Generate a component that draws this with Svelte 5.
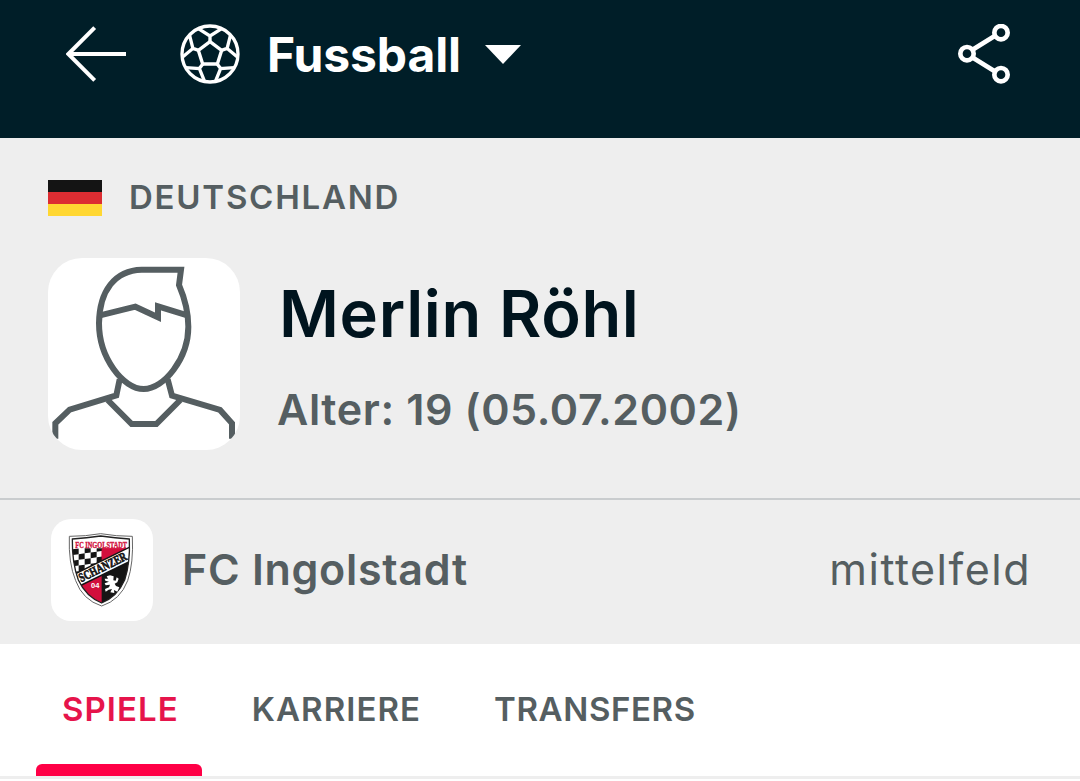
<script lang="ts">
  let activeTab = 'SPIELE';
  const tabs = ['SPIELE', 'KARRIERE', 'TRANSFERS'];

  // seams of the ball, one group per patch on the rim
  const patches = [0, 72, 144, 216, 288];
</script>

<header class="topbar">
  <button class="icon-btn back" aria-label="Zurück">
    <svg viewBox="48 42 180 180" width="60" height="60">
      <path d="M134 53L55 132L134 211M58 132H228" fill="none" stroke="#fff" stroke-width="12" />
    </svg>
  </button>
  <svg class="ball" viewBox="-90 -90 180 180" width="60" height="60">
    <g fill="none" stroke="#fff" stroke-width="10">
      <circle r="84" />
      <path d="M0 -37L35 -11L22 30H-22L-35 -11Z" />
      {#each patches as angle}
        <path transform="rotate({angle})" d="M0 -36V-54M-35 -76L0 -54L35 -76" />
      {/each}
    </g>
  </svg>
  <h1 class="sport">Fussball</h1>
  <svg class="caret" viewBox="0 0 36 19" width="36" height="19">
    <path d="M0 0H36L18 19Z" fill="#fff" />
  </svg>
  <button class="icon-btn share" aria-label="Teilen">
    <svg viewBox="42 42 180 180" width="60" height="60">
      <g fill="none" stroke="#fff" stroke-width="14">
        <path d="M100 118L164 78M100 144L164 184" />
        <circle cx="81" cy="131" r="20" />
        <circle cx="183" cy="68" r="20" />
        <circle cx="183" cy="194" r="20" />
      </g>
    </svg>
  </button>
</header>

<section class="player">
  <div class="country">
    <span class="flag"><i></i><i></i><i></i></span>
    <span class="country-name">DEUTSCHLAND</span>
  </div>
  <div class="profile">
    <div class="portrait">
      <svg viewBox="24 24 576 576" width="192" height="192">
        <g fill="none" stroke="#555e61" stroke-width="18">
          <path d="M423 59H305C225 61 178 122 177 220C177 325 250 417 311 417C372 417 445 325 445 230C445 180 432 140 417 105Z" />
          <path d="M180 196L286 170L354 202V169L442 196" />
          <path d="M239 388L229 436L89 479L46 520V566M383 388L396 437L540 480L576 520V566" />
          <path d="M203 450L275 522H349L421 450" />
        </g>
      </svg>
    </div>
    <div class="details">
      <h2 class="name">Merlin Röhl</h2>
      <p class="age">Alter: 19 (05.07.2002)</p>
    </div>
  </div>
</section>

<section class="team">
  <div class="crest">
    <svg viewBox="18 21 306 306" width="102" height="102">
      <defs>
        <clipPath id="shield">
          <path d="M82 81Q124 78 167 72Q211 78 253 81Q256 153 239 204Q217 254 170 273Q123 254 100 204Q81 153 82 81Z" />
        </clipPath>
      </defs>
      <path d="M73 73Q122 73 167 65Q213 73 262 73Q266 154 248 206Q226 264 170 282Q113 264 92 206Q70 154 73 73Z" fill="#fff" stroke="#666" stroke-width="3" />
      <g clip-path="url(#shield)">
        <rect x="76" y="66" width="190" height="214" fill="#d20f3c" />
        <path d="M76 66H170V165L76 220Z" fill="#fff" />
        <g fill="#151515" transform="translate(83 112) skewY(-8)">
          {#each [0, 1, 2, 3, 4] as row}
            {#each [0, 1, 2, 3, 4] as col}
              {#if (row + col) % 2 === 0}
                <rect x={col * 18} y={row * 17} width="18" height="17" />
              {/if}
            {/each}
          {/each}
        </g>
        <path d="M170 160L266 108V290H170Z" fill="#151515" />
        <path d="M76 66H266V109H76Z" fill="#fff" />
        <path d="M170 109H250L170 148Z" fill="#d20f3c" />
        <path d="M80 188L266 97V145L80 236Z" fill="#151515" />
        <path d="M80 193L266 102V140L80 231Z" fill="#fff" />
      </g>
      <path d="M82 81Q124 78 167 72Q211 78 253 81Q256 153 239 204Q217 254 170 273Q123 254 100 204Q81 153 82 81Z" fill="none" stroke="#222" stroke-width="4" />
      <text x="91" y="107" class="crest-text" font-size="25" textLength="155" lengthAdjust="spacingAndGlyphs" fill="#d20f3c" stroke="#d20f3c">FC INGOLSTADT</text>
      <text transform="translate(109 211) rotate(-26.5)" class="crest-text" font-size="38" textLength="156" lengthAdjust="spacingAndGlyphs" fill="#151515" stroke="#151515" stroke-width="2">SCHANZER</text>
      <text x="138" y="229" class="crest-text sans" font-size="24" textLength="25" lengthAdjust="spacingAndGlyphs" fill="#fff">04</text>
      <path d="M187 197L183 190L193 187L204 190L203 202L210 203L213 193L219 197L215 208L207 212L211 219L221 223L215 236L205 231L206 240L194 238L199 228L189 230L180 236L178 228L190 223L193 215L180 217L177 211L190 206L179 203L177 197Z" transform="translate(2 3)" fill="#fff" />
    </svg>
  </div>
  <span class="team-name">FC Ingolstadt</span>
  <span class="position">mittelfeld</span>
</section>

<nav class="tabs">
  {#each tabs as tab}
    <button class="tab" class:active={tab === activeTab} on:click={() => (activeTab = tab)}>{tab}</button>
  {/each}
</nav>

<style>
  :global(body) {
    margin: 0;
    background: #fff;
    font-family: Inter, 'Liberation Sans', sans-serif;
    color: #555e61;
  }
  h1, h2, p {
    margin: 0;
  }
  button {
    padding: 0;
    border: 0;
    background: none;
    font: inherit;
    color: inherit;
  }
  svg {
    display: block;
  }
  .topbar {
    display: flex;
    align-items: center;
    box-sizing: border-box;
    height: 138px;
    padding: 0 66px 30px;
    background: #001e28;
    color: #fff;
  }
  .ball {
    margin-left: 54px;
  }
  .sport {
    margin-left: 27px;
    padding-top: 2px;
    font-size: 48px;
    line-height: 58px;
    font-weight: 700;
    letter-spacing: -0.1px;
  }
  .caret {
    margin-left: 24px;
  }
  .share {
    margin-left: auto;
  }
  .player {
    box-sizing: border-box;
    height: 362px;
    padding: 41px 48px 0;
    background: #eee;
    border-bottom: 2px solid #c9ccce;
  }
  .country {
    display: flex;
    align-items: flex-end;
    height: 37px;
  }
  .flag {
    width: 54px;
    height: 36px;
    display: flex;
    flex-direction: column;
  }
  .flag i {
    flex: 1;
    background: #141414;
  }
  .flag i:nth-child(2) {
    background: #dc2d32;
  }
  .flag i:nth-child(3) {
    background: #ffd732;
  }
  .country-name {
    margin-left: 27px;
    font-size: 33px;
    line-height: 38px;
    font-weight: 600;
    letter-spacing: 1.75px;
  }
  .profile {
    display: flex;
    margin-top: 42px;
  }
  .portrait {
    width: 192px;
    height: 192px;
    border-radius: 34px;
    background: #fff;
    overflow: hidden;
  }
  .details {
    margin-left: 37px;
    white-space: nowrap;
  }
  .name {
    padding: 16px 0 0 2px;
    font-size: 65px;
    line-height: 80px;
    font-weight: 600;
    letter-spacing: 0.65px;
    color: #00141e;
  }
  .age {
    margin-top: 29px;
    font-size: 43px;
    line-height: 52px;
    font-weight: 600;
    letter-spacing: 0.6px;
  }
  .team {
    display: flex;
    align-items: center;
    box-sizing: border-box;
    height: 144px;
    padding: 0 49px 4px 51px;
    background: #eee;
    font-size: 43px;
    line-height: 50px;
  }
  .crest {
    width: 102px;
    height: 102px;
    border-radius: 20px;
    background: #fff;
  }
  .crest-text {
    font-family: 'Liberation Serif', serif;
    font-weight: 700;
  }
  .crest-text.sans {
    font-family: 'Liberation Sans', sans-serif;
  }
  .team-name,
  .position {
    padding-bottom: 2px;
  }
  .team-name {
    margin-left: 29px;
    font-weight: 600;
    letter-spacing: 0.7px;
  }
  .position {
    margin-left: auto;
    letter-spacing: 1.5px;
  }
  .tabs {
    display: flex;
    box-sizing: border-box;
    height: 135px;
    padding-left: 36px;
    gap: 24px;
    border-bottom: 3px solid #eee;
  }
  .tab {
    display: flex;
    flex-direction: column;
    padding: 45px 23px 0 26px;
    font-size: 33px;
    line-height: 40px;
    font-weight: 600;
    letter-spacing: 1.05px;
  }
  .tab:last-child {
    letter-spacing: 0.6px;
  }
  .tab.active {
    color: #e6144b;
  }
  .tab.active::after {
    content: '';
    height: 12px;
    margin: auto -23px 0 -26px;
    border-radius: 6px 6px 0 0;
    background: #ff0046;
  }
</style>
